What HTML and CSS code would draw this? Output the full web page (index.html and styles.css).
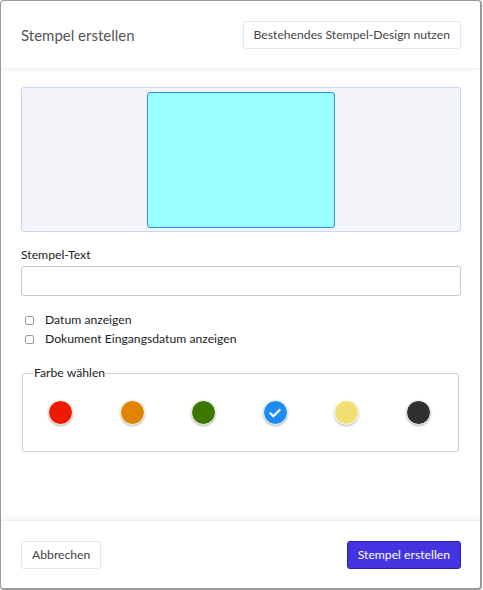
FILE: index.html
```html
<!DOCTYPE html>
<html lang="de">
<head>
<meta charset="utf-8">
<title>Stempel erstellen</title>
<link rel="stylesheet" href="styles.css">
</head>
<body>
<div class="dialog">
  <header class="dlg-header">
    <h1 class="dlg-title">Stempel erstellen</h1>
    <button class="btn btn-light">Bestehendes Stempel-Design nutzen</button>
  </header>
  <main class="dlg-body">
    <div class="preview">
      <div class="stamp"></div>
    </div>
    <label class="field-label" for="stext">Stempel-Text</label>
    <input id="stext" class="text-input" type="text">
    <div class="checks">
      <label class="check"><span class="box"></span>Datum anzeigen</label>
      <label class="check"><span class="box"></span>Dokument Eingangsdatum anzeigen</label>
    </div>
    <fieldset class="colors">
      <legend>Farbe wählen</legend>
      <div class="swatches">
        <span class="swatch red"></span>
        <span class="swatch orange"></span>
        <span class="swatch green"></span>
        <span class="swatch blue selected"><svg viewBox="0 0 24 24" width="16" height="16"><path d="M5 12.5l4.5 4.5L19 7.5" fill="none" stroke="#fff" stroke-width="3.2" stroke-linecap="round" stroke-linejoin="round"/></svg></span>
        <span class="swatch yellow"></span>
        <span class="swatch dark"></span>
      </div>
    </fieldset>
  </main>
  <footer class="dlg-footer">
    <button class="btn btn-light">Abbrechen</button>
    <button class="btn btn-primary">Stempel erstellen</button>
  </footer>
</div>
</body>
</html>
```
FILE: styles.css
```css
* { box-sizing: border-box; }
html, body { margin: 0; padding: 0; background: #fff; }
body { font-family: "Lato", "Open Sans", sans-serif; color: #222; }

.dialog {
  width: 482px;
  height: 590px;
  border: 1px solid #9a9a9a;
  border-right-width: 2px;
  border-bottom-width: 2px;
  border-radius: 4px;
  display: flex;
  flex-direction: column;
  background: #fff;
  overflow: hidden;
}

.dlg-header {
  height: 68px;
  flex: none;
  display: flex;
  align-items: center;
  justify-content: space-between;
  padding: 0 19px 0 20px;
  border-bottom: 1px solid #f0f0f0;
  box-shadow: 0 2px 3px rgba(0,0,0,0.04);
}
.dlg-title {
  margin: 0;
  font-size: 15px;
  font-weight: 400;
  color: #555;
}

.btn {
  font-family: inherit;
  font-size: 12.2px;
  height: 28px;
  padding: 0 10px;
  border-radius: 3px;
  cursor: pointer;
}
.btn-light {
  background: #fff;
  border: 1px solid #e2e6f0;
  color: #444;
}
.btn-primary {
  background: #4433e0;
  border: 1px solid #2e22a8;
  color: #fff;
}

.dlg-body {
  flex: 1;
  padding: 18px 19px 0 20px;
  display: flex;
  flex-direction: column;
}

.preview {
  height: 145px;
  flex: none;
  background: #f4f5fa;
  border: 1px solid #c9d5f2;
  border-radius: 3px;
  display: flex;
  justify-content: center;
  align-items: center;
}
.stamp {
  width: 188px;
  height: 136px;
  background: #99ffff;
  border: 1px solid #2f8ff0;
  border-radius: 3px;
}

.field-label {
  margin-top: 15px;
  font-size: 12.2px;
  line-height: 16px;
  color: #222;
}
.text-input {
  margin-top: 3px;
  height: 30px;
  flex: none;
  border: 1px solid #c8c8c8;
  border-radius: 3px;
  font-family: inherit;
}

.checks {
  margin-top: 16px;
  display: flex;
  flex-direction: column;
  gap: 3px;
}
.check {
  display: flex;
  align-items: center;
  font-size: 12.2px;
  line-height: 16px;
  color: #222;
  height: 16px;
}
.box {
  width: 9px;
  height: 9px;
  border: 1px solid #9a9a9a;
  border-radius: 2px;
  margin: 0 11px 0 4px;
  background: #fff;
}

.colors {
  margin: 18px 2px 0 1px;
  padding: 0;
  border: 1px solid #cfcfcf;
  border-radius: 3px;
  height: 87px;
  flex: none;
}
.colors legend {
  font-size: 12.2px;
  line-height: 16px;
  padding: 0 1px;
  margin-left: 10px;
  color: #222;
}
.swatches {
  display: flex;
  justify-content: space-between;
  padding: 19px 27px 0 25px;
}
.swatch {
  width: 25px;
  height: 25px;
  border-radius: 50%;
  border: 1px solid #fff;
  box-shadow: 0 1px 2px rgba(0,0,0,0.3);
  display: flex;
  align-items: center;
  justify-content: center;
}
.red { background: #ee1a00; }
.orange { background: #e08300; }
.green { background: #3a7800; }
.blue { background: #1e8cf0; }
.yellow { background: #f0e072; }
.dark { background: #2f2f2f; }

.dlg-footer {
  height: 68px;
  flex: none;
  margin-top: auto;
  display: flex;
  align-items: center;
  justify-content: space-between;
  padding: 0 19px 0 20px;
  border-top: 1px solid #eeeeee;
  box-shadow: 0 -3px 4px rgba(0,0,0,0.04);
}
```
